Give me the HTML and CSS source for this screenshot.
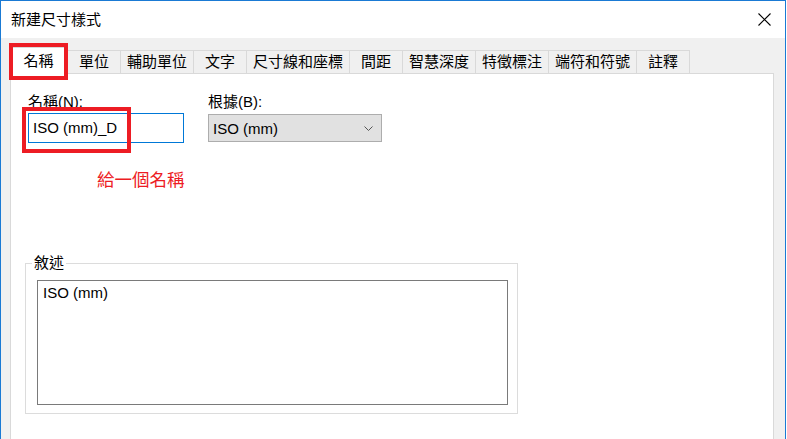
FILE: index.html
```html
<!DOCTYPE html>
<html>

<head>
    <title>新建尺寸樣式</title>
    <link rel="stylesheet" href="styles.css">
</head>

<body>
    <div class="window">
        <div class="titlebar">
            <span class="title">新建尺寸樣式</span>
            <svg class="close" width="13" height="13" viewBox="0 0 13 13">
                <path d="M0.5 0.5 L12.5 12.5 M12.5 0.5 L0.5 12.5" stroke="#000" stroke-width="1.1" fill="none"/>
            </svg>
        </div>

        <div class="tabs">
            <div class="tab active">名稱</div>
            <div class="tab">單位</div>
            <div class="tab">輔助單位</div>
            <div class="tab">文字</div>
            <div class="tab">尺寸線和座標</div>
            <div class="tab">間距</div>
            <div class="tab">智慧深度</div>
            <div class="tab">特徵標注</div>
            <div class="tab">端符和符號</div>
            <div class="tab">註釋</div>
        </div>
        <!-- annotation around the first tab -->
        <div class="mark mark-tab"></div>

        <div class="panel">
            <div class="fields">
                <div class="field name-field">
                    <label>名稱(N):</label>
                    <div class="text-input">ISO (mm)_D</div>
                </div>
                <div class="field base-field">
                    <label>根據(B):</label>
                    <div class="dropdown">
                        <span>ISO (mm)</span>
                        <svg width="9" height="5" viewBox="0 0 9 5">
                            <path d="M0.5 0.5 L4.5 4.5 L8.5 0.5" stroke="#555" fill="none"/>
                        </svg>
                    </div>
                </div>
            </div>

            <p class="note">給一個名稱</p>

            <fieldset class="desc">
                <legend>敘述</legend>
                <div class="desc-box">ISO (mm)</div>
            </fieldset>

            <!-- annotation around the name box -->
            <div class="mark mark-name"></div>
        </div>
    </div>
</body>
</html>
```

FILE: styles.css
```css
html, body {
    margin: 0;
    height: 100%;
    overflow: hidden;
    background-color: #fff;
}

body {
    font-family: "Liberation Sans", "Noto Sans CJK TC", sans-serif;
    font-size: 15px;
    color: #000;
}

.window {
    position: relative;
    box-sizing: border-box;
    width: 786px;
    height: 100%;
    display: flex;
    flex-direction: column;
    background-color: #f0f0f0;
    border: 1px solid #1a7ad4;
    border-bottom: none;
}

.titlebar {
    flex-shrink: 0;
    height: 37px;
    background-color: #fff;
    display: flex;
    align-items: center;
    justify-content: space-between;
    padding: 0 14px 0 10px;
}

.title {
    line-height: 18px;
}

.close {
    display: block;
}

.tabs {
    flex-shrink: 0;
    display: flex;
    align-items: flex-end;
    padding: 9px 0 0 9px;
}

.tab {
    box-sizing: border-box;
    height: 23px;
    min-width: 54px;
    padding: 0 6px;
    margin-left: -1px;
    line-height: 22px;
    text-align: center;
    border: 1px solid #d9d9d9;
    border-bottom: none;
    background-color: #f0f0f0;
}

.tab.active {
    position: relative;
    z-index: 1;
    width: 57px;
    height: 27px;
    margin-left: 0;
    margin-bottom: -1px;
    margin-right: 1px;
    line-height: 26px;
    background-color: #fff;
}

.panel {
    position: relative;
    flex: 1;
    margin: 0 11px 0 9px;
    padding: 19px 0 0 14px;
    background-color: #fff;
    border: 1px solid #d9d9d9;
    border-bottom: none;
}

.fields {
    display: flex;
    gap: 24px;
    margin-left: 3px;
}

.field label {
    display: block;
    line-height: 18px;
}

.text-input {
    box-sizing: border-box;
    width: 156px;
    height: 30px;
    margin-top: 2px;
    padding: 0 4px;
    line-height: 28px;
    border: 1px solid #0078d7;
    background-color: #fff;
}

.dropdown {
    box-sizing: border-box;
    width: 174px;
    height: 28px;
    margin-top: 3px;
    padding: 0 8px 0 4px;
    display: flex;
    align-items: center;
    justify-content: space-between;
    border: 1px solid #adadad;
    background-color: #e1e1e1;
}

.note {
    margin: 26px 0 0 72px;
    font-size: 17.5px;
    line-height: 22px;
    color: #ed1c24;
}

.desc {
    box-sizing: border-box;
    width: 493px;
    margin: 63px 0 0 0;
    padding: 8px 9px 8px 11px;
    border: 1px solid #dcdcdc;
}

.desc legend {
    margin-left: -5px;
    padding: 0 2px;
    line-height: 18px;
}

.desc-box {
    box-sizing: border-box;
    width: 471px;
    height: 125px;
    padding: 3px 5px;
    line-height: 18px;
    border: 1px solid #7a7a7a;
}

.mark {
    position: absolute;
    box-sizing: border-box;
    border: 4px solid #ed1c24;
    z-index: 2;
}

.mark-tab {
    left: 8px;
    top: 42px;
    width: 59px;
    height: 37px;
}

.mark-name {
    left: 11px;
    top: 33px;
    width: 109px;
    height: 46px;
}
```
